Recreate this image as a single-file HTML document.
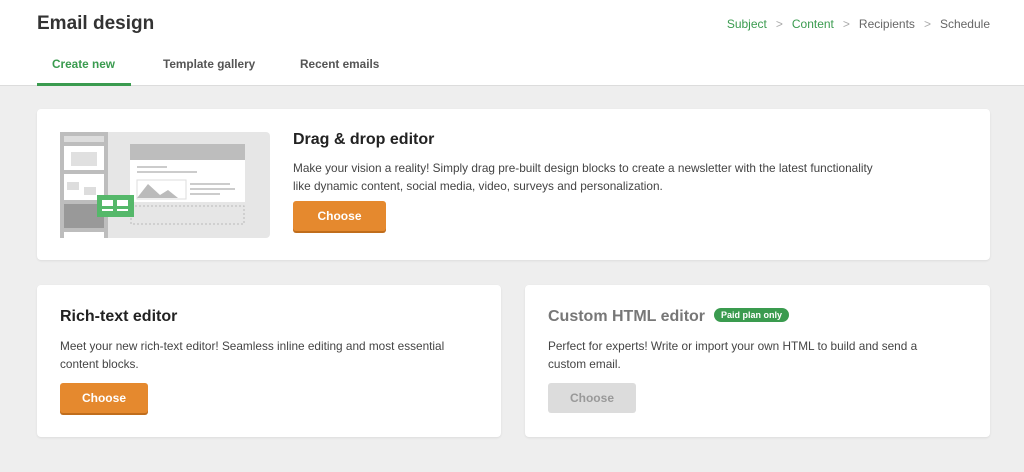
<!DOCTYPE html>
<html><head><style>
*{margin:0;padding:0;box-sizing:border-box}
body{width:1024px;height:472px;background:#eeeeee;font-family:"Liberation Sans",sans-serif;color:#333;position:relative;overflow:hidden}
.hdr{position:absolute;left:0;top:0;width:1024px;height:86px;background:#fff;border-bottom:1px solid #dcdcdc}
.abs{position:absolute}
.card{position:absolute;background:#fff;border-radius:4px;box-shadow:0 1px 2px rgba(0,0,0,.08)}
h2{font-size:16px;font-weight:bold;color:#222;white-space:nowrap;line-height:20px}
p{font-size:11.8px;line-height:18px;color:#444}
.btn{position:absolute;width:93px;height:30px;border-radius:3px;background:#e5892e;color:#fff;font-weight:bold;font-size:12px;display:flex;align-items:center;justify-content:center;box-shadow:0 2px 0 #c06d1c}
</style></head><body>
<div class="hdr">
<div class="abs" style="left:37px;top:13px;font-size:19px;font-weight:bold;color:#333">Email design</div>
<div class="abs" style="right:34px;top:17px;font-size:12px;color:#666;white-space:nowrap">
<span style="color:#3a9b4f">Subject</span><span style="color:#aaa;margin:0 9px">&gt;</span><span style="color:#3a9b4f">Content</span><span style="color:#aaa;margin:0 9px">&gt;</span>Recipients<span style="color:#aaa;margin:0 9px">&gt;</span>Schedule</div>
<div class="abs" style="left:52px;top:57px;font-size:11.8px;font-weight:bold;color:#3a9b4f">Create new</div>
<div class="abs" style="left:37px;top:83px;width:94px;height:3px;background:#3a9b4f"></div>
<div class="abs" style="left:163px;top:57px;font-size:11.8px;font-weight:bold;color:#555">Template gallery</div>
<div class="abs" style="left:300px;top:57px;font-size:11.8px;font-weight:bold;color:#555">Recent emails</div>
</div>

<div class="card" style="left:37px;top:109px;width:953px;height:151px">
<svg class="abs" style="left:23px;top:23px" width="210" height="106" viewBox="0 0 210 106">
<rect width="210" height="106" rx="4" fill="#e6e6e6"/>
<rect x="0" y="0" width="48" height="106" fill="#bdbdbd"/>
<rect x="4" y="4" width="40" height="6" fill="#ddd"/>
<rect x="4" y="14" width="40" height="24" fill="#fff"/><rect x="11" y="20" width="26" height="14" fill="#e0e0e0"/>
<rect x="4" y="42" width="40" height="26" fill="#fff"/><rect x="7" y="50" width="12" height="8" fill="#ddd"/><rect x="24" y="55" width="12" height="8" fill="#ddd"/>
<rect x="4" y="72" width="40" height="24" fill="#999"/>
<rect x="4" y="100" width="40" height="6" fill="#fff"/>
<rect x="70" y="12" width="115" height="16" fill="#bdbdbd"/>
<rect x="70" y="28" width="115" height="42" fill="#fff"/>
<rect x="77" y="34" width="30" height="2" fill="#ccc"/><rect x="77" y="39" width="60" height="2" fill="#ccc"/>
<polygon points="77,66 88,52 100,63 108,58 118,66" fill="#bbb"/><rect x="77" y="48" width="49" height="19" fill="none" stroke="#ddd"/>
<rect x="130" y="51" width="40" height="2" fill="#ccc"/><rect x="130" y="56" width="45" height="2" fill="#ccc"/><rect x="130" y="61" width="30" height="2" fill="#ccc"/>
<rect x="71" y="74" width="113" height="18" fill="none" stroke="#bbb" stroke-dasharray="2 2"/>
<rect x="37" y="63" width="37" height="22" fill="#55b86a"/>
<rect x="42" y="68" width="11" height="6" fill="#fff"/><rect x="57" y="68" width="11" height="6" fill="#fff"/>
<rect x="42" y="77" width="11" height="2" fill="#fff"/><rect x="57" y="77" width="11" height="2" fill="#fff"/>
</svg>
<h2 class="abs" style="left:256px;top:21px">Drag &amp; drop editor</h2>
<p class="abs" style="left:256px;top:50px;width:600px">Make your vision a reality! Simply drag pre-built design blocks to create a newsletter with the latest functionality like dynamic content, social media, video, surveys and personalization.</p>
<div class="btn" style="left:256px;top:92px">Choose</div>
</div>

<div class="card" style="left:37px;top:285px;width:464px;height:152px">
<h2 class="abs" style="left:23px;top:22px">Rich-text editor</h2>
<p class="abs" style="left:23px;top:52px;width:410px">Meet your new rich-text editor! Seamless inline editing and most essential content blocks.</p>
<div class="btn" style="left:23px;top:98px;width:88px">Choose</div>
</div>

<div class="card" style="left:525px;top:285px;width:465px;height:152px">
<h2 class="abs" style="left:23px;top:22px;color:#777">Custom HTML editor</h2>
<div class="abs" style="left:189px;top:23px;background:#3a9b4f;color:#fff;font-size:9px;font-weight:bold;border-radius:8px;padding:2px 7px">Paid plan only</div>
<p class="abs" style="left:23px;top:52px;width:410px">Perfect for experts! Write or import your own HTML to build and send a custom email.</p>
<div class="btn" style="left:23px;top:98px;width:88px;background:#dcdcdc;color:#999;box-shadow:none">Choose</div>
</div>
</body></html>
